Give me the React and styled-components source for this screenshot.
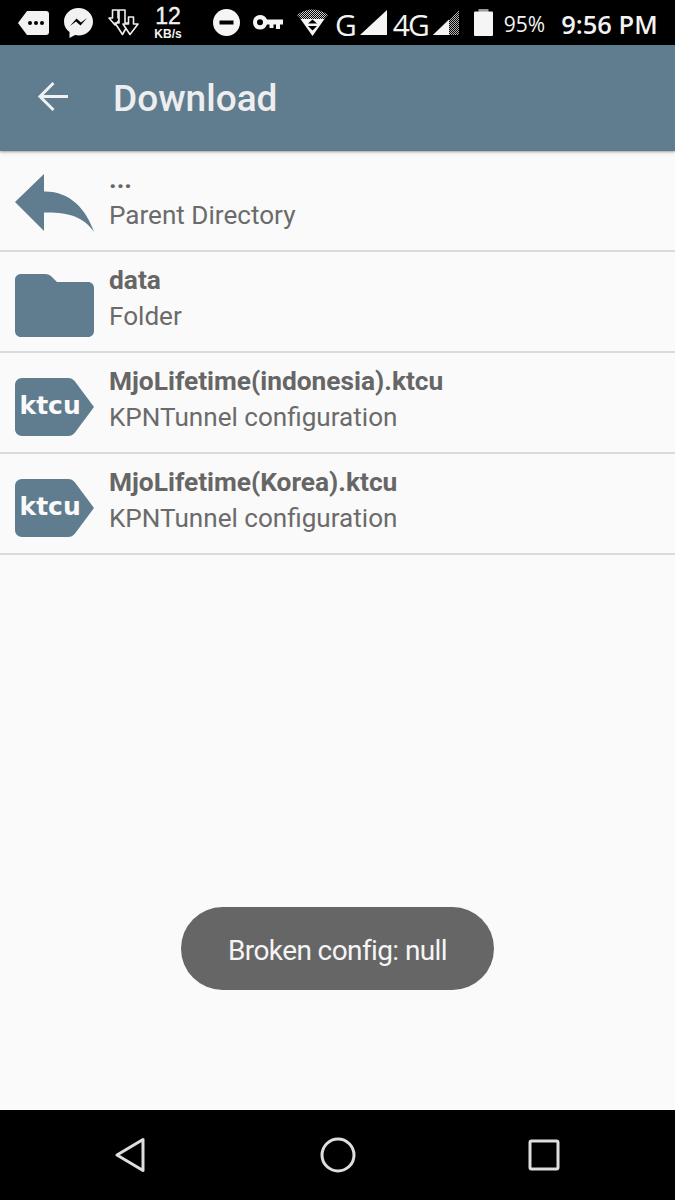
import React from 'react';
import styled, { createGlobalStyle } from 'styled-components';

const slate = '#5f7d8e';

const files = [
	{ name: '...', type: 'Parent Directory', kind: 'parent', light: true },
	{ name: 'data', type: 'Folder', kind: 'folder' },
	{ name: 'MjoLifetime(indonesia).ktcu', type: 'KPNTunnel configuration', kind: 'ktcu' },
	{ name: 'MjoLifetime(Korea).ktcu', type: 'KPNTunnel configuration', kind: 'ktcu' },
];

const iconTop = { parent: 23, folder: 22, ktcu: 25 };

function ParentIcon() {
	return (
		<svg width="80" height="60" viewBox="0 0 80 60">
			<path d="M0 28 L29 0 V17.500 C55 17 71 35 79 58 C68 42 52 38 29 38.500 V57 Z" fill={slate} />
		</svg>
	);
}

function FolderIcon() {
	return (
		<svg width="80" height="64" viewBox="0 0 80 64">
			<path d="M6 0 H30 C33 0 35 1 37 3 L42 8 H73 C76.500 8 79 10.500 79 14 V57 C79 60.500 76.500 63 73 63 H6 C2.500 63 0 60.500 0 57 V6 C0 2.500 2.500 0 6 0 Z" fill={slate} />
		</svg>
	);
}

function KtcuIcon() {
	return (
		<svg width="80" height="60" viewBox="0 0 80 60">
			<path d="M7 0 H53 C56 0 58 1 60 3.500 L79 29 L60 54.500 C58 57 56 58 53 58 H7 C3 58 0 55 0 51 V7 C0 3 3 0 7 0 Z" fill={slate} />
			<text x="4.500" y="35.500" fill="#fafafa" fontFamily="'DejaVu Sans', sans-serif" fontWeight="700" fontSize="25">ktcu</text>
		</svg>
	);
}

const icons = { parent: ParentIcon, folder: FolderIcon, ktcu: KtcuIcon };

function FileRow({ file }) {
	const Icon = icons[file.kind];
	return (
		<Row>
			<IconSlot $top={iconTop[file.kind]}><Icon /></IconSlot>
			<RowText>
				<FileName>{file.name}</FileName>
				<FileType>{file.type}</FileType>
			</RowText>
		</Row>
	);
}

export default function App() {
	return (
		<Screen>
			<GlobalStyle />
			<StatusBar>
				<StatusItem $left={18}>
					<svg width="31" height="26" viewBox="0 0 31 26">
						<path d="M9 1 H28 C30 1 31 2 31 4 V22 C31 24 30 25 28 25 H9 L0 13 Z" fill="#f2f2f2" />
						<circle cx="12" cy="13" r="2" fill="#000" />
						<circle cx="18" cy="13" r="2" fill="#000" />
						<circle cx="24" cy="13" r="2" fill="#000" />
					</svg>
				</StatusItem>
				<StatusItem $left={15}>
					<svg width="29" height="30" viewBox="0 0 29 30">
						<path d="M14.500 0 C6.500 0 0 6 0 13.500 C0 18 2 21.500 5.500 24 V30 L11 27 C12.500 27.300 13.500 27.500 14.500 27.500 C22.500 27.500 29 21.500 29 13.500 C29 6 22.500 0 14.500 0 Z" fill="#f2f2f2" />
						<path d="M6 18 L12.500 10.500 L17 14.500 L23 10 L16.500 17.500 L12 13.500 Z" fill="#000" />
					</svg>
				</StatusItem>
				<StatusItem $left={15}>
					<svg width="31" height="27" viewBox="0 0 31 27">
						<g fill="#000" stroke="#efefef" strokeWidth="1.600" strokeLinejoin="round">
							<path d="M4.500 1 H10 V9 H13 L7 16 L1 9 H4.500 Z" />
							<path d="M11 1 H17 V14 H21 L14.500 25.500 L7 14 H11 Z" />
							<path d="M20.500 8 H25.500 V15 H30 L22 25.500 L15 15 H20.500 Z" />
						</g>
					</svg>
				</StatusItem>
				<SpeedBlock $left={13}>
					<SpeedValue>12</SpeedValue>
					<SpeedUnit>KB/s</SpeedUnit>
				</SpeedBlock>
				<StatusItem $left={29}>
					<svg width="27" height="27" viewBox="0 0 27 27">
						<circle cx="13.500" cy="13.500" r="13.500" fill="#f5f5f5" />
						<rect x="6.500" y="11.500" width="14" height="4" fill="#000" />
					</svg>
				</StatusItem>
				<StatusItem $left={13}>
					<svg width="30" height="15" viewBox="0 0 30 15">
						<path d="M7 0 C10.500 0 13 2 14 4.500 H30 V9.500 H27 V14 H23 V9.500 H20.500 V13 H16.500 V9.500 H14 C13 12.500 10.500 14.500 7 14.500 C3 14.500 0 11.500 0 7.300 C0 3 3 0 7 0 Z" fill="#f5f5f5" />
						<circle cx="7" cy="7.300" r="3" fill="#000" />
					</svg>
				</StatusItem>
				<StatusItem $left={14}>
					<svg width="31" height="27" viewBox="0 0 31 27">
						<defs>
							<pattern id="dotsA" width="2" height="2" patternUnits="userSpaceOnUse">
								<rect width="1" height="1" fill="#cfcfcf" />
								<rect x="1" y="1" width="1" height="1" fill="#cfcfcf" />
							</pattern>
						</defs>
						<path d="M0 6 C8 -1.500 23 -1.500 31 6 L26 11 H5 Z" fill="url(#dotsA)" />
						<path d="M3.500 10 H27.500 L15.500 27 Z" fill="#f5f5f5" />
						<path d="M15.500 10.500 L20 14.500 H11 Z M11 17 H20 L15.500 21.500 Z" fill="#000" />
					</svg>
				</StatusItem>
				<NetworkLabel $left={7}>G</NetworkLabel>
				<StatusItem $left={5}>
					<svg width="27" height="25" viewBox="0 0 27 25">
						<path d="M27 0 V25 H0 Z" fill="#f5f5f5" />
					</svg>
				</StatusItem>
				<NetworkLabel $left={6}>4G</NetworkLabel>
				<StatusItem $left={5}>
					<svg width="26" height="25" viewBox="0 0 26 25">
						<defs>
							<pattern id="dotsB" width="2" height="2" patternUnits="userSpaceOnUse">
								<rect width="1" height="1" fill="#b5b5b5" />
								<rect x="1" y="1" width="1" height="1" fill="#b5b5b5" />
							</pattern>
						</defs>
						<path d="M26 0 V25 H0 Z" fill="url(#dotsB)" />
						<path d="M16 9.600 V25 H0 Z" fill="#f5f5f5" />
					</svg>
				</StatusItem>
				<StatusItem $left={15}>
					<svg width="19" height="27" viewBox="0 0 19 27">
						<rect x="4.500" y="0" width="10" height="3" fill="#9a9a9a" />
						<rect x="0" y="2.500" width="19" height="24.500" rx="1" fill="#f5f5f5" />
					</svg>
				</StatusItem>
				<BatteryText $left={11}>95%</BatteryText>
				<Clock $left={16}>9:56 PM</Clock>
			</StatusBar>
			<AppBar>
				<svg width="32" height="32" viewBox="0 0 32 32">
					<path d="M31 15.500 H3 M16.500 2 L3 15.500 L16.500 29" fill="none" stroke="#f1f1f1" strokeWidth="3" />
				</svg>
				<AppTitle>Download</AppTitle>
			</AppBar>
			<Content>
				<List>
					{files.map(file => <FileRow key={file.name} file={file} />)}
				</List>
				<Toast>Broken config: null</Toast>
			</Content>
			<NavBar>
				<svg width="32" height="36" viewBox="0 0 32 36">
					<path d="M28 2.500 V33.500 L2 18 Z" fill="none" stroke="#dedede" strokeWidth="3" strokeLinejoin="round" />
				</svg>
				<svg width="36" height="36" viewBox="0 0 36 36">
					<circle cx="18" cy="18" r="16" fill="none" stroke="#dedede" strokeWidth="3" />
				</svg>
				<svg width="32" height="32" viewBox="0 0 32 32">
					<rect x="2" y="2" width="28" height="28" rx="1.500" fill="none" stroke="#dedede" strokeWidth="3" />
				</svg>
			</NavBar>
		</Screen>
	);
}

const GlobalStyle = createGlobalStyle`
	html, body {
		margin: 0;
		padding: 0;
		background: #fafafa;
	}
`;

const Screen = styled.div`
	display: flex;
	flex-direction: column;
	width: 675px;
	height: 1200px;
	overflow: hidden;
	font-family: Roboto, sans-serif;
`;

const StatusBar = styled.header`
	display: flex;
	align-items: center;
	flex: 0 0 45px;
	background: #000;
	color: #f2f2f2;
`;

const StatusItem = styled.div`
	display: flex;
	margin-left: ${props => props.$left}px;
`;

const SpeedBlock = styled(StatusItem)`
	flex-direction: column;
	align-items: center;
	box-sizing: border-box;
	width: 32px;
	height: 45px;
	padding-top: 4px;
	font-family: 'Liberation Sans', sans-serif;
`;

const SpeedValue = styled.span`
	font-size: 23px;
	line-height: 24px;
	-webkit-text-stroke: 0.4px #f2f2f2;
`;

const SpeedUnit = styled.span`
	font-size: 12px;
	font-weight: 700;
	line-height: 13px;
`;

const NetworkLabel = styled(StatusItem)`
	font-family: 'Open Sans', sans-serif;
	font-size: 30px;
	line-height: 32px;
	letter-spacing: -2px;
	padding-top: 4px;
`;

const BatteryText = styled(StatusItem)`
	font-family: 'Open Sans', sans-serif;
	font-size: 21px;
	padding-top: 3px;
`;

const Clock = styled(StatusItem)`
	font-family: 'Open Sans', sans-serif;
	font-size: 25.500px;
	font-weight: 600;
	white-space: nowrap;
	padding-top: 3px;
`;

const AppBar = styled.div`
	display: flex;
	align-items: center;
	flex: 0 0 106px;
	box-sizing: border-box;
	padding: 0 0 2px 37px;
	gap: 44px;
	background: ${slate};
	box-shadow: 0 1px 2px rgba(0, 0, 0, 0.3), 0 3px 4px rgba(0, 0, 0, 0.06);
	position: relative;
	z-index: 1;
`;

const AppTitle = styled.h1`
	margin: 3px 0 0;
	color: #eeeeee;
	font-size: 37px;
	font-weight: 500;
	line-height: 40px;
`;

const Content = styled.main`
	position: relative;
	flex: 1;
	background: #fafafa;
`;

const List = styled.ul`
	margin: 0;
	padding: 0;
	list-style: none;
`;

const Row = styled.li`
	display: flex;
	box-sizing: border-box;
	height: 101px;
	padding-left: 15px;
	gap: 14px;
	border-bottom: 2px solid #dadada;
`;

const IconSlot = styled.div`
	display: flex;
	flex: 0 0 80px;
	padding-top: ${props => props.$top}px;
`;

const RowText = styled.div`
	display: flex;
	flex-direction: column;
	padding-top: 10px;
`;

const FileName = styled.span`
	color: #666666;
	font-size: 26.300px;
	font-weight: 700;
	line-height: 36px;
	white-space: nowrap;
`;

const FileType = styled.span`
	color: #6b6b6b;
	font-size: 26.100px;
	font-weight: 400;
	line-height: 36px;
	white-space: nowrap;
`;

const Toast = styled.div`
	position: absolute;
	left: 181px;
	top: 756px;
	display: flex;
	align-items: center;
	justify-content: center;
	box-sizing: border-box;
	width: 313px;
	height: 83px;
	padding-top: 3px;
	border-radius: 42px;
	background: #666666;
	color: #f5f5f5;
	font-size: 28px;
	letter-spacing: -0.600px;
`;

const NavBar = styled.nav`
	display: flex;
	align-items: center;
	justify-content: space-between;
	flex: 0 0 90px;
	box-sizing: border-box;
	padding: 0 115px 0 115px;
	background: #000;
`;
